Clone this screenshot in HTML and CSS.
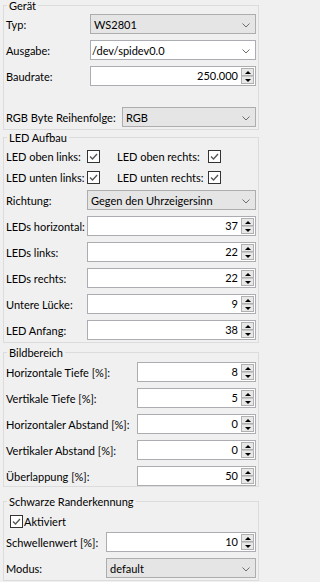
FILE: index.html
```html
<!DOCTYPE html>
<html lang="de">
<head>
<meta charset="utf-8">
<title>Gerät</title>
<link rel="stylesheet" href="styles.css">
</head>
<body>
<fieldset class="group g1">
  <legend>Gerät</legend>
  <div class="row">
    <span class="lbl">Typ:</span>
    <div class="combo"><span class="txt">WS2801</span><svg class="chev" width="8" height="5" viewBox="0 0 8 5"><polyline points="0.5,0.5 4,4 7.5,0.5"/></svg></div>
  </div>
  <div class="row">
    <span class="lbl">Ausgabe:</span>
    <div class="combo edit"><span class="txt">/dev/spidev0.0</span><svg class="chev" width="8" height="5" viewBox="0 0 8 5"><polyline points="0.5,0.5 4,4 7.5,0.5"/></svg></div>
  </div>
  <div class="row">
    <span class="lbl">Baudrate:</span>
    <div class="spin"><span class="val">250.000</span><span class="arr"><i class="up"></i><i class="dn"></i></span></div>
  </div>
  <div class="row rgb">
    <span class="lbl">RGB Byte Reihenfolge:</span>
    <div class="combo"><span class="txt">RGB</span><svg class="chev" width="8" height="5" viewBox="0 0 8 5"><polyline points="0.5,0.5 4,4 7.5,0.5"/></svg></div>
  </div>
</fieldset>

<fieldset class="group g2">
  <legend>LED Aufbau</legend>
  <div class="cbgrid">
    <span class="lbl">LED oben links:</span>
    <span class="cb"><svg width="11" height="11" viewBox="0 0 11 11"><polyline points="2,5.5 4.5,8 9,3"/></svg></span>
    <span class="lbl">LED oben rechts:</span>
    <span class="cb"><svg width="11" height="11" viewBox="0 0 11 11"><polyline points="2,5.5 4.5,8 9,3"/></svg></span>
    <span class="lbl">LED unten links:</span>
    <span class="cb"><svg width="11" height="11" viewBox="0 0 11 11"><polyline points="2,5.5 4.5,8 9,3"/></svg></span>
    <span class="lbl">LED unten rechts:</span>
    <span class="cb"><svg width="11" height="11" viewBox="0 0 11 11"><polyline points="2,5.5 4.5,8 9,3"/></svg></span>
  </div>
  <div class="row first">
    <span class="lbl">Richtung:</span>
    <div class="combo"><span class="txt">Gegen den Uhrzeigersinn</span><svg class="chev" width="8" height="5" viewBox="0 0 8 5"><polyline points="0.5,0.5 4,4 7.5,0.5"/></svg></div>
  </div>
  <div class="row">
    <span class="lbl">LEDs horizontal:</span>
    <div class="spin"><span class="val">37</span><span class="arr"><i class="up"></i><i class="dn"></i></span></div>
  </div>
  <div class="row">
    <span class="lbl">LEDs links:</span>
    <div class="spin"><span class="val">22</span><span class="arr"><i class="up"></i><i class="dn"></i></span></div>
  </div>
  <div class="row">
    <span class="lbl">LEDs rechts:</span>
    <div class="spin"><span class="val">22</span><span class="arr"><i class="up"></i><i class="dn"></i></span></div>
  </div>
  <div class="row">
    <span class="lbl">Untere Lücke:</span>
    <div class="spin"><span class="val">9</span><span class="arr"><i class="up"></i><i class="dn"></i></span></div>
  </div>
  <div class="row">
    <span class="lbl">LED Anfang:</span>
    <div class="spin"><span class="val">38</span><span class="arr"><i class="up"></i><i class="dn"></i></span></div>
  </div>
</fieldset>

<fieldset class="group g3">
  <legend>Bildbereich</legend>
  <div class="row">
    <span class="lbl">Horizontale Tiefe [%]:</span>
    <div class="spin"><span class="val">8</span><span class="arr"><i class="up"></i><i class="dn"></i></span></div>
  </div>
  <div class="row">
    <span class="lbl">Vertikale Tiefe [%]:</span>
    <div class="spin"><span class="val">5</span><span class="arr"><i class="up"></i><i class="dn"></i></span></div>
  </div>
  <div class="row">
    <span class="lbl">Horizontaler Abstand [%]:</span>
    <div class="spin"><span class="val">0</span><span class="arr"><i class="up"></i><i class="dn"></i></span></div>
  </div>
  <div class="row">
    <span class="lbl">Vertikaler Abstand [%]:</span>
    <div class="spin"><span class="val">0</span><span class="arr"><i class="up"></i><i class="dn"></i></span></div>
  </div>
  <div class="row">
    <span class="lbl">Überlappung [%]:</span>
    <div class="spin"><span class="val">50</span><span class="arr"><i class="up"></i><i class="dn"></i></span></div>
  </div>
</fieldset>

<fieldset class="group g4">
  <legend>Schwarze Randerkennung</legend>
  <div class="cbline">
    <span class="cb"><svg width="11" height="11" viewBox="0 0 11 11"><polyline points="2,5.5 4.5,8 9,3"/></svg></span>
    <span class="lbl">Aktiviert</span>
  </div>
  <div class="row first">
    <span class="lbl">Schwellenwert [%]:</span>
    <div class="spin"><span class="val">10</span><span class="arr"><i class="up"></i><i class="dn"></i></span></div>
  </div>
  <div class="row">
    <span class="lbl">Modus:</span>
    <div class="combo"><span class="txt">default</span><svg class="chev" width="8" height="5" viewBox="0 0 8 5"><polyline points="0.5,0.5 4,4 7.5,0.5"/></svg></div>
  </div>
</fieldset>
</body>
</html>
```

FILE: styles.css
```css
html, body {
  margin: 0;
  padding: 0;
  background: #f0f0f0;
}
body {
  font-family: Lato, "Liberation Sans", sans-serif;
  font-size: 11px;
  color: #000;
  width: 262px;
}
.group {
  margin: 0 3px;
  border: 1px solid #dcdcdc;
  padding: 3px 2px 2px 2px;
  min-width: 0;
}
.group legend {
  padding: 0 2px;
  margin-left: 1px;
  line-height: 11px;
  height: 11px;
  white-space: nowrap;
}
.g1 { margin-top: 0; }
.g2 { margin-top: 2px; }
.g3 { margin-top: 4px; padding-top: 4px; padding-bottom: 0; }
.g4 { margin-top: 9px; padding-top: 5px; }

.row {
  display: grid;
  align-items: center;
  height: 20px;
}
.row + .row { margin-top: 6px; }
.g1 .row { grid-template-columns: 84px 1fr; }
.g1 .row.rgb { grid-template-columns: 116px 1fr; margin-top: 21px; }
.g2 .row { grid-template-columns: 81px 1fr; }
.g2 .row.first { margin-top: 2px; }
.g3 .row { grid-template-columns: 131px 1fr; }
.g4 .row { grid-template-columns: 100px 1fr; }
.g4 .row.first { margin-top: 1px; }

.lbl { white-space: nowrap; line-height: 13px; }

.combo {
  display: flex;
  align-items: center;
  height: 20px;
  box-sizing: border-box;
  border: 1px solid #adadad;
  background: #e5e5e5;
  padding: 0 5px 0 3px;
}
.combo.edit {
  background: #fff;
  border-color: #abadb3;
  padding-left: 1px;
}
.combo .txt { flex: 1; white-space: nowrap; line-height: 13px; }
.chev {
  fill: none;
  stroke: #6d6d6d;
  stroke-width: 1;
  margin-top: 2px;
}

.spin {
  display: flex;
  height: 20px;
  box-sizing: border-box;
  border: 1px solid #abadb3;
  background: #fff;
}
.spin .val {
  flex: 1;
  text-align: right;
  line-height: 18px;
  padding-right: 3px;
}
.spin .arr {
  width: 13px;
  display: flex;
  flex-direction: column;
  padding: 1px 1px 1px 0;
}
.spin .arr i {
  flex: 1;
  display: flex;
  align-items: center;
  justify-content: center;
  background: #e8e8e8;
  border: 1px solid #b0b0b0;
}
.spin .arr i + i { border-top-color: #c8c8c8; }
.spin .arr i::before {
  content: "";
  width: 0;
  height: 0;
  border-left: 3px solid transparent;
  border-right: 3px solid transparent;
}
.spin .arr i.up::before { border-bottom: 3px solid #000; }
.spin .arr i.dn::before { border-top: 3px solid #000; }

.cb {
  width: 13px;
  height: 13px;
  box-sizing: border-box;
  border: 1px solid #333;
  background: #fff;
  display: flex;
  align-items: center;
  justify-content: center;
}
.cb svg {
  fill: none;
  stroke: #555;
  stroke-width: 1.3;
}

.cbgrid {
  display: grid;
  grid-template-columns: 81px 30px 91px 13px;
  grid-auto-rows: 21px;
  align-items: center;
}
.cbline {
  display: flex;
  align-items: center;
  height: 19px;
  padding-left: 4px;
}
.cbline .lbl { margin-left: 1px; }
```
